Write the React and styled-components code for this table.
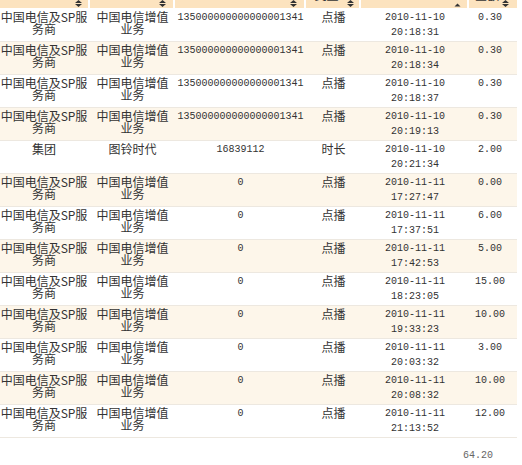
import React from "react";
import styled, { createGlobalStyle } from "styled-components";

const Global = createGlobalStyle`
  html, body { margin: 0; padding: 0; background: #fff; }
  body { width: 522px; height: 465px; overflow: hidden; }
`;

const COLS = "90px 85px 131px 55px 108px 48px";

const Table = styled.div`
  width: 517px;
  display: flex;
  flex-direction: column;
  font-family: "Noto Sans CJK SC", "Liberation Sans", sans-serif;
  font-size: 12px;
  color: #333;
`;

const HeaderRow = styled.div`
  display: grid;
  grid-template-columns: ${COLS};
  height: 22px;
  margin-top: -14px;
  border-bottom: 1px solid #fff;
`;

const HeaderCell = styled.div`
  position: relative;
  background: #fce3bf;
  margin-right: ${(p) => (p.$last ? 0 : 2)}px;
  display: flex;
  align-items: flex-start;
  justify-content: center;
  padding: 3px 12px 0 0;
  line-height: 12px;
  overflow: hidden;
`;

const SortIcon = styled.svg`
  position: absolute;
  right: ${(p) => p.$right}px;
  bottom: 1px;
  width: 7px;
  height: 7px;
`;

const Row = styled.div`
  display: grid;
  grid-template-columns: ${COLS};
  height: 32px;
  border-bottom: 1px solid #ede8e0;
  background: ${(p) => (p.$alt ? "#fdf6ea" : "#ffffff")};
`;

const Cell = styled.div`
  text-align: center;
  padding: 2px ${(p) => p.$pr ?? 4}px 0 ${(p) => p.$pl ?? 4}px;
  line-height: 12px;
  overflow: hidden;
`;

const NumCell = styled.div`
  text-align: center;
  font-family: "Liberation Mono", "DejaVu Sans Mono", monospace;
  font-size: 10px;
  line-height: 15px;
  padding-top: 1px;
  padding-right: ${(p) => p.$pr || 0}px;
  white-space: nowrap;
`;

const DateLine = styled.div``;

const Footer = styled.div`
  display: flex;
  justify-content: flex-end;
  padding: 12px 24px 0 0;
  font-family: "Liberation Mono", "DejaVu Sans Mono", monospace;
  font-size: 10px;
  line-height: 12px;
  color: #666;
`;

const Both = ({ right }) => (
  <SortIcon $right={right} viewBox="0 0 7 7">
    <path d="M3.5 0 L7 3 L0 3 Z M0 4 L7 4 L3.5 7 Z" fill="#333" />
  </SortIcon>
);

const Up = ({ right }) => (
  <SortIcon $right={right} viewBox="0 0 7 7">
    <path d="M3.5 3.5 L6.5 6.5 L0.5 6.5 Z" fill="#333" />
  </SortIcon>
);

const SP = "中国电信及SP服务商";
const ZZ = "中国电信增值业务";
const LONG = "135000000000000001341";

const rows = [
  [SP, ZZ, LONG, "点播", "2010-11-10", "20:18:31", "0.30"],
  [SP, ZZ, LONG, "点播", "2010-11-10", "20:18:34", "0.30"],
  [SP, ZZ, LONG, "点播", "2010-11-10", "20:18:37", "0.30"],
  [SP, ZZ, LONG, "点播", "2010-11-10", "20:19:13", "0.30"],
  ["集团", "图铃时代", "16839112", "时长", "2010-11-10", "20:21:34", "2.00"],
  [SP, ZZ, "0", "点播", "2010-11-11", "17:27:47", "0.00"],
  [SP, ZZ, "0", "点播", "2010-11-11", "17:37:51", "6.00"],
  [SP, ZZ, "0", "点播", "2010-11-11", "17:42:53", "5.00"],
  [SP, ZZ, "0", "点播", "2010-11-11", "18:23:05", "15.00"],
  [SP, ZZ, "0", "点播", "2010-11-11", "19:33:23", "10.00"],
  [SP, ZZ, "0", "点播", "2010-11-11", "20:03:32", "3.00"],
  [SP, ZZ, "0", "点播", "2010-11-11", "20:08:32", "10.00"],
  [SP, ZZ, "0", "点播", "2010-11-11", "21:13:52", "12.00"],
];

export default function App() {
  return (
    <>
      <Global />
      <Table>
        <HeaderRow>
          <HeaderCell><Both right={6} /></HeaderCell>
          <HeaderCell><Both right={7} /></HeaderCell>
          <HeaderCell><Both right={7} /></HeaderCell>
          <HeaderCell>类型<Both right={5} /></HeaderCell>
          <HeaderCell><Up right={6} /></HeaderCell>
          <HeaderCell $last>金额<Both right={8} /></HeaderCell>
        </HeaderRow>
        {rows.map((r, i) => (
          <Row key={i} $alt={i % 2 === 1}>
            <Cell $pl={0} $pr={2}>{r[0]}</Cell>
            <Cell $pl={5} $pr={5}>{r[1]}</Cell>
            <NumCell>{r[2]}</NumCell>
            <Cell $pl={0} $pr={0}>{r[3]}</Cell>
            <NumCell>
              <DateLine>{r[4]}</DateLine>
              <DateLine>{r[5]}</DateLine>
            </NumCell>
            <NumCell $pr={6}>{r[6]}</NumCell>
          </Row>
        ))}
        <Footer>64.20</Footer>
      </Table>
    </>
  );
}
